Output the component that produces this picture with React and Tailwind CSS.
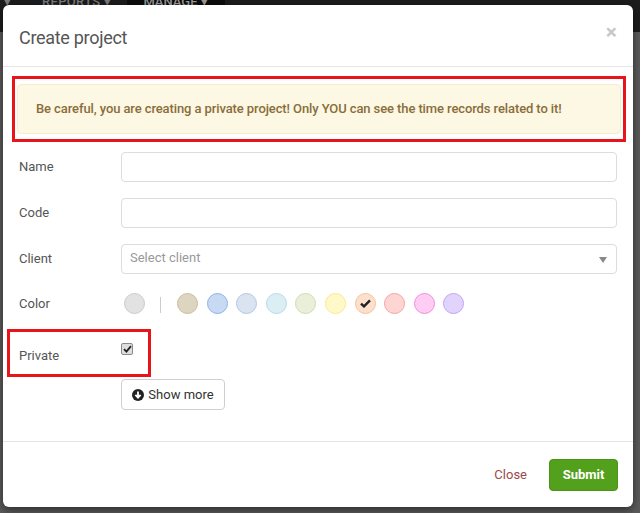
import React, { useState } from 'react';

const colors = [
  { bg: '#ddd5c0', border: '#c9bd9c' },
  { bg: '#c8d9f3', border: '#8db2ea' },
  { bg: '#dae3f0', border: '#b3c7e3' },
  { bg: '#daeef4', border: '#b4dbe9' },
  { bg: '#e9efd9', border: '#cfdcae' },
  { bg: '#fff8c8', border: '#fbe98a' },
  { bg: '#fde0cb', border: '#f3c2a0', checked: true },
  { bg: '#ffd5d3', border: '#f3a4a2' },
  { bg: '#ffccf3', border: '#ee8ede' },
  { bg: '#e2d3fd', border: '#c2a3f3' },
];

function Row({ label, children }) {
  return (
    <div className="flex items-center pl-[16px] pr-[16px]">
      <div className="w-[102px] text-[13px] text-[#555]">{label}</div>
      <div className="flex-1">{children}</div>
    </div>
  );
}

export default function App() {
  const [name, setName] = useState('');
  const [code, setCode] = useState('');

  return (
    <div
      className="relative w-[640px] h-[513px] overflow-hidden bg-[#5a5a5a]"
      style={{ fontFamily: 'Roboto, "Liberation Sans", sans-serif' }}
    >
      {/* navbar behind the overlay */}
      <div className="absolute top-0 left-0 w-full h-[32px] bg-[#1c1c1c]">
        <div className="flex h-full text-[13px] text-[#7a7a7a] font-medium leading-none">
          <span className="ml-[4px] -mt-[5px]">▾</span>
          <span className="ml-[31px] -mt-[5px] tracking-wide">REPORTS ▾</span>
          <span className="ml-[16px] w-[98px] bg-[#0c0c0c] pl-[16px] h-full">
            <span className="block -mt-[5px] text-[#9a9a9a]">MANAGE ▾</span>
          </span>
        </div>
      </div>

      <div className="relative z-10 ml-[3px] mt-[5px] w-[630px] h-[502px] bg-white rounded-[6px] shadow-[0_3px_9px_rgba(0,0,0,0.5)] flex flex-col">
        {/* header */}
        <div className="h-[62px] flex items-start justify-between pl-[16px] pr-[16px] pt-[21px] border-b border-[#e5e5e5]">
          <h4 className="text-[18px] leading-[24px] text-[#555] tracking-[-0.3px]">Create project</h4>
          <span className="-mt-[4px] text-[21px] font-bold leading-[21px] text-[#c8c8c8]">×</span>
        </div>

        {/* body */}
        <div className="flex-1">
          <div className="mt-[9px] ml-[9px] mr-[7px] border-[3px] border-[#e8141c] pt-[5px] pb-[5px] pl-[2px] pr-[2px]">
            <div className="h-[50px] flex items-center pl-[18px] bg-[#fcf8e3] border border-[#f7ecd0] rounded-[4px] text-[13px] font-medium text-[#8a6d3b] tracking-[-0.1px]">
              Be careful, you are creating a private project! Only YOU can see the time records related to it!
            </div>
          </div>

          <div className="mt-[10px]">
            <Row label="Name">
              <input
                value={name}
                onChange={(e) => setName(e.target.value)}
                className="w-full h-[30px] border border-[#dcdcdc] rounded-[4px] px-[8px] text-[13px] outline-none"
              />
            </Row>
          </div>
          <div className="mt-[16px]">
            <Row label="Code">
              <input
                value={code}
                onChange={(e) => setCode(e.target.value)}
                className="w-full h-[30px] border border-[#dcdcdc] rounded-[4px] px-[8px] text-[13px] outline-none"
              />
            </Row>
          </div>
          <div className="mt-[16px]">
            <Row label="Client">
              <div className="w-full h-[30px] border border-[#dcdcdc] rounded-[4px] pl-[8px] pr-[9px] flex items-center justify-between text-[13px] text-[#999]">
                <span className="-mt-[2px]">Select client</span>
                <svg width="8" height="6" viewBox="0 0 8 6" className="mt-[2px]">
                  <path d="M0 0 L8 0 L4 6 Z" fill="#888" />
                </svg>
              </div>
            </Row>
          </div>
          <div className="mt-[15px]">
            <Row label="Color">
              <div className="h-[30px] flex items-center -mt-[1px]">
                <span className="ml-[3px] w-[21px] h-[21px] rounded-full bg-[#e2e2e2] border-[1.5px] border-[#cbcbcb]" />
                <span className="ml-[15px] w-[1px] h-[16px] bg-[#cccccc] mt-[4px]" />
                <div className="ml-[16px] flex gap-[8.6px]">
                  {colors.map((c, i) => (
                    <span
                      key={i}
                      className="w-[21px] h-[21px] rounded-full border-[1.5px] flex items-center justify-center"
                      style={{ backgroundColor: c.bg, borderColor: c.border }}
                    >
                      {c.checked && (
                        <svg width="11" height="9" viewBox="0 0 11 9">
                          <path d="M1 4.6 L4 7.4 L10 1.4" stroke="#222" strokeWidth="2.4" fill="none" />
                        </svg>
                      )}
                    </span>
                  ))}
                </div>
              </div>
            </Row>
          </div>

          {/* private row, outlined in red */}
          <div className="mt-[11px] ml-[4px] w-[144px] h-[48px] border-[3px] border-[#e8141c] flex items-start pl-[9px]">
            <div className="w-[102px] mt-[16px] text-[13px] leading-[16px] text-[#555]">Private</div>
            <span className="mt-[11px] w-[12px] h-[12px] rounded-[2px] border border-[#8a8a8a] bg-[#dedede] flex items-center justify-center">
              <svg width="9" height="8" viewBox="0 0 9 8">
                <path d="M1 4.2 L3.4 6.6 L8 1.2" stroke="#222" strokeWidth="1.8" fill="none" />
              </svg>
            </span>
          </div>

          <button className="mt-[2px] ml-[118px] w-[104px] h-[31px] border border-[#cfcfcf] rounded-[4px] bg-white flex items-center justify-center gap-[4px] text-[13px] text-[#333]">
            <svg width="12" height="12" viewBox="0 0 12 12">
              <circle cx="6" cy="6" r="6" fill="#222" />
              <path d="M6 2.6 V8.4 M3.4 5.9 L6 8.6 L8.6 5.9" stroke="#fff" strokeWidth="1.8" fill="none" />
            </svg>
            Show more
          </button>
        </div>

        {/* footer */}
        <div className="h-[66px] border-t border-[#e5e5e5] flex items-center justify-end pr-[15px]">
          <button className="text-[13px] text-[#9b4a4a] mr-[22px]">Close</button>
          <button className="w-[69px] h-[32px] rounded-[4px] bg-[#52a01c] border border-[#4a9218] text-white text-[13px] font-bold">
            Submit
          </button>
        </div>
      </div>
    </div>
  );
}
